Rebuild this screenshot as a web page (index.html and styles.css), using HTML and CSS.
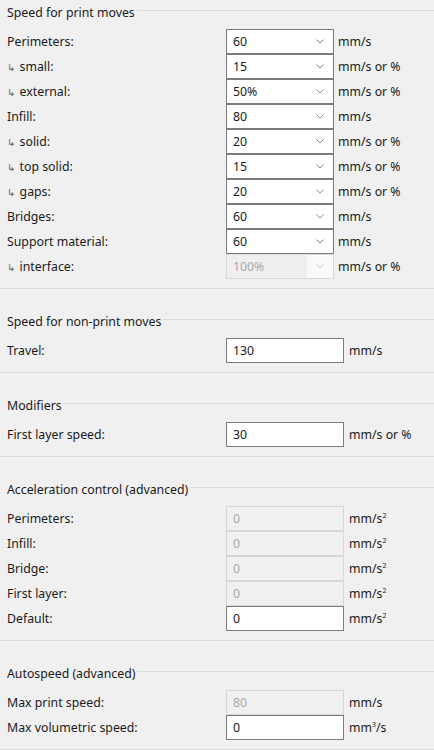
FILE: index.html
```html
<!DOCTYPE html>
<html>
<head>
<meta charset="utf-8">
<link rel="stylesheet" href="styles.css">
</head>
<body>
<div class="page">
  <section class="group first">
    <div class="group-title"><span>Speed for print moves</span></div>
    <div class="row"><span class="label">Perimeters:</span><div class="combo"><span class="val">60</span><svg class="chev" width="8" height="5" viewBox="0 0 8 5"><polyline points="0.5,0.5 4,4 7.5,0.5"/></svg></div><span class="unit">mm/s</span></div>
    <div class="row"><span class="label"><span class="sub">↳</span> small:</span><div class="combo"><span class="val">15</span><svg class="chev" width="8" height="5" viewBox="0 0 8 5"><polyline points="0.5,0.5 4,4 7.5,0.5"/></svg></div><span class="unit">mm/s or %</span></div>
    <div class="row"><span class="label"><span class="sub">↳</span> external:</span><div class="combo"><span class="val">50%</span><svg class="chev" width="8" height="5" viewBox="0 0 8 5"><polyline points="0.5,0.5 4,4 7.5,0.5"/></svg></div><span class="unit">mm/s or %</span></div>
    <div class="row"><span class="label">Infill:</span><div class="combo"><span class="val">80</span><svg class="chev" width="8" height="5" viewBox="0 0 8 5"><polyline points="0.5,0.5 4,4 7.5,0.5"/></svg></div><span class="unit">mm/s</span></div>
    <div class="row"><span class="label"><span class="sub">↳</span> solid:</span><div class="combo"><span class="val">20</span><svg class="chev" width="8" height="5" viewBox="0 0 8 5"><polyline points="0.5,0.5 4,4 7.5,0.5"/></svg></div><span class="unit">mm/s or %</span></div>
    <div class="row"><span class="label"><span class="sub">↳</span> top solid:</span><div class="combo"><span class="val">15</span><svg class="chev" width="8" height="5" viewBox="0 0 8 5"><polyline points="0.5,0.5 4,4 7.5,0.5"/></svg></div><span class="unit">mm/s or %</span></div>
    <div class="row"><span class="label"><span class="sub">↳</span> gaps:</span><div class="combo"><span class="val">20</span><svg class="chev" width="8" height="5" viewBox="0 0 8 5"><polyline points="0.5,0.5 4,4 7.5,0.5"/></svg></div><span class="unit">mm/s or %</span></div>
    <div class="row"><span class="label">Bridges:</span><div class="combo"><span class="val">60</span><svg class="chev" width="8" height="5" viewBox="0 0 8 5"><polyline points="0.5,0.5 4,4 7.5,0.5"/></svg></div><span class="unit">mm/s</span></div>
    <div class="row"><span class="label">Support material:</span><div class="combo"><span class="val">60</span><svg class="chev" width="8" height="5" viewBox="0 0 8 5"><polyline points="0.5,0.5 4,4 7.5,0.5"/></svg></div><span class="unit">mm/s</span></div>
    <div class="row"><span class="label"><span class="sub">↳</span> interface:</span><div class="combo disabled"><span class="val">100%</span><svg class="chev" width="8" height="5" viewBox="0 0 8 5"><polyline points="0.5,0.5 4,4 7.5,0.5"/></svg></div><span class="unit">mm/s or %</span></div>
  </section>

  <section class="group">
    <div class="group-title"><span>Speed for non-print moves</span></div>
    <div class="row"><span class="label">Travel:</span><div class="field">130</div><span class="unit wide">mm/s</span></div>
  </section>

  <section class="group">
    <div class="group-title"><span>Modifiers</span></div>
    <div class="row"><span class="label">First layer speed:</span><div class="field">30</div><span class="unit wide">mm/s or %</span></div>
  </section>

  <section class="group accel">
    <div class="group-title"><span>Acceleration control (advanced)</span></div>
    <div class="row"><span class="label">Perimeters:</span><div class="field disabled">0</div><span class="unit wide">mm/s<sup>2</sup></span></div>
    <div class="row"><span class="label">Infill:</span><div class="field disabled">0</div><span class="unit wide">mm/s<sup>2</sup></span></div>
    <div class="row"><span class="label">Bridge:</span><div class="field disabled">0</div><span class="unit wide">mm/s<sup>2</sup></span></div>
    <div class="row"><span class="label">First layer:</span><div class="field disabled">0</div><span class="unit wide">mm/s<sup>2</sup></span></div>
    <div class="row"><span class="label">Default:</span><div class="field">0</div><span class="unit wide">mm/s<sup>2</sup></span></div>
  </section>

  <section class="group">
    <div class="group-title"><span>Autospeed (advanced)</span></div>
    <div class="row"><span class="label">Max print speed:</span><div class="field disabled">80</div><span class="unit wide">mm/s</span></div>
    <div class="row"><span class="label">Max volumetric speed:</span><div class="field">0</div><span class="unit wide">mm<sup>3</sup>/s</span></div>
  </section>
</div>
</body>
</html>
```

FILE: styles.css
```css
html, body {
  margin: 0;
  padding: 0;
}

body {
  background: #f0f0f0;
  font-family: "Noto Sans", "Open Sans", "DejaVu Sans", sans-serif;
  font-size: 12.3px;
  color: #1a1a1a;
  width: 434px;
  height: 750px;
  overflow: hidden;
}

.page {
  display: flex;
  flex-direction: column;
}

.group {
  display: flex;
  flex-direction: column;
  border-bottom: 1px solid #dcdcdc;
  padding-bottom: 9px;
  margin-top: 20px;
}

.group.first {
  margin-top: 0;
}

.group-title {
  display: flex;
  align-items: center;
  height: 24px;
  padding-left: 7px;
  margin-bottom: 5px;
  white-space: nowrap;
}

.group-title::after {
  content: "";
  flex: 1;
  border-top: 1px solid #dcdcdc;
  margin-left: 2px;
  margin-top: -3px;
}

.row {
  display: grid;
  grid-template-columns: 219px auto 1fr;
  align-items: center;
  height: 25px;
  padding-left: 7px;
  box-sizing: border-box;
}

.label {
  white-space: nowrap;
}

.sub {
  display: inline-block;
  font-family: "DejaVu Sans", sans-serif;
  font-size: 10px;
  color: #666666;
  margin-right: 1px;
  vertical-align: 0;
}

.combo {
  box-sizing: border-box;
  width: 108px;
  height: 25px;
  border: 1px solid #7c7c7c;
  background: #ffffff;
  display: flex;
  align-items: center;
}

.combo .val {
  flex: 1;
  height: 100%;
  display: flex;
  align-items: center;
  padding-left: 6px;
}

.chev {
  margin: 0 9px 0 4px;
  fill: none;
  stroke: #8a8a8a;
  stroke-width: 1;
}

.combo.disabled {
  border-color: #d9d9d9;
  background: #fafafa;
  color: #a9a9a9;
}

.combo.disabled .val {
  background: #efefef;
}

.combo.disabled .chev {
  stroke: #c4c4c4;
  margin-left: 9px;
}

.field {
  box-sizing: border-box;
  width: 118px;
  height: 25px;
  border: 1px solid #7c7c7c;
  background: #ffffff;
  display: flex;
  align-items: center;
  padding-left: 6px;
}

.field.disabled {
  border-color: #d6d6d6;
  background: #f0f0f0;
  color: #a9a9a9;
}

.unit {
  white-space: nowrap;
  padding-left: 4px;
}

.unit.wide {
  padding-left: 5px;
}

.unit sup {
  font-size: 7px;
  line-height: 0;
  vertical-align: 5px;
}
```
